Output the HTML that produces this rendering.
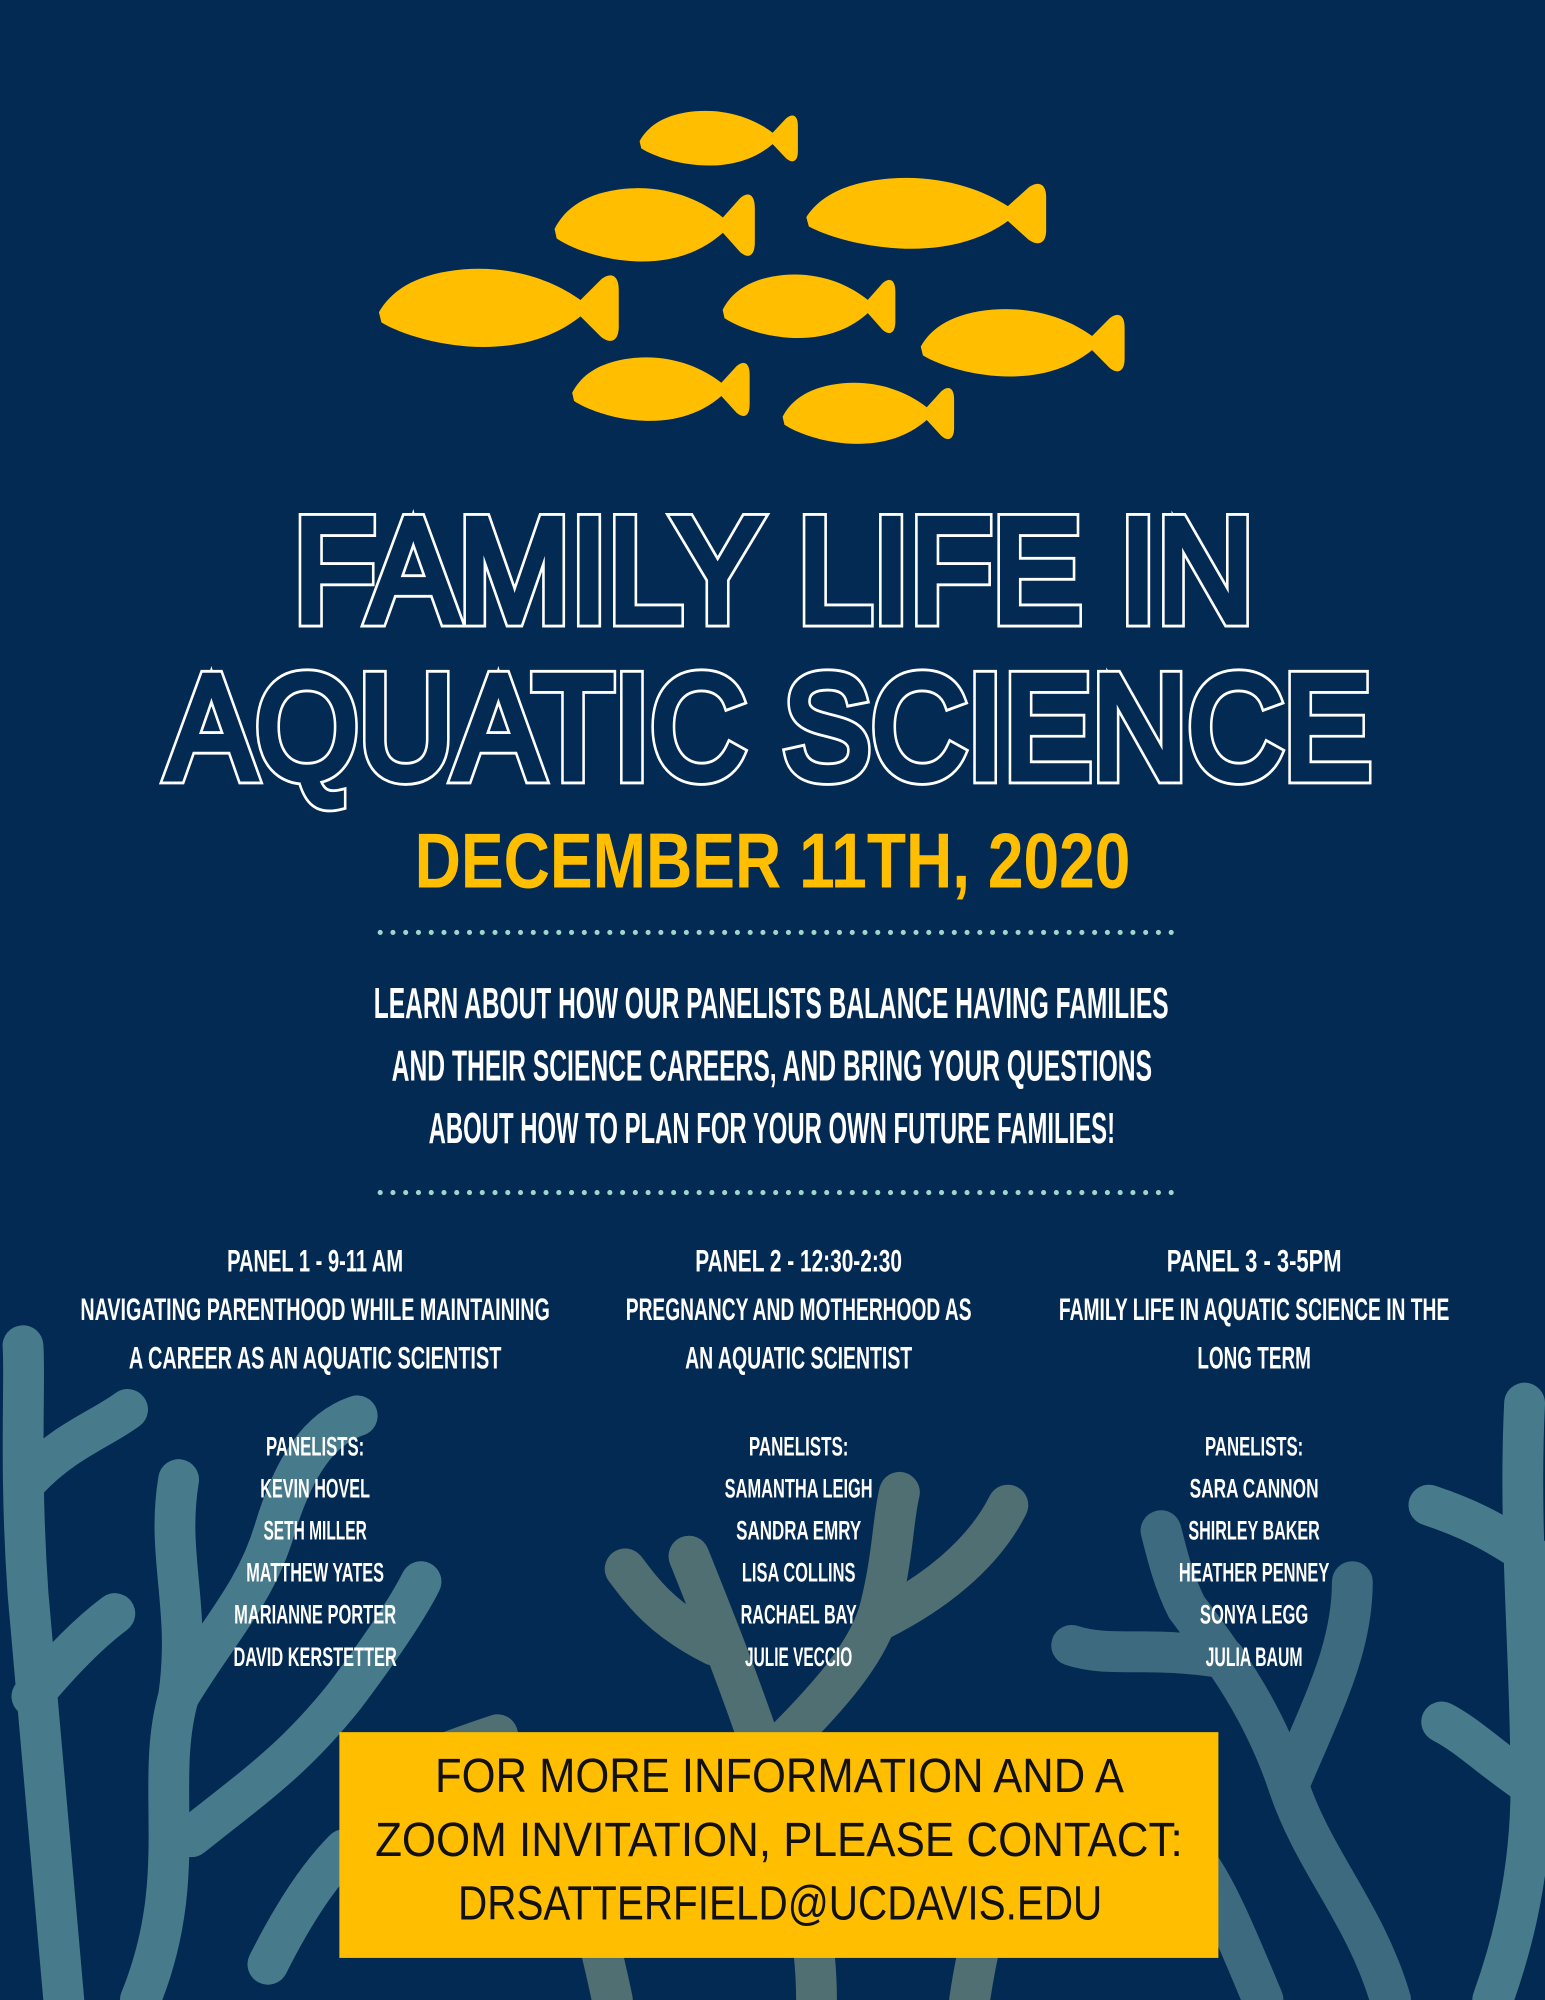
<!DOCTYPE html>
<html><head><meta charset="utf-8"><style>
html,body{margin:0;padding:0;background:#032a52;}
svg{display:block;width:1545px;height:2000px;}
.w{font-family:"Liberation Sans",sans-serif;font-weight:bold;fill:#fff;text-anchor:middle;}
</style></head><body>
<svg viewBox="0 0 1211 1568" preserveAspectRatio="none" xmlns="http://www.w3.org/2000/svg">
<rect width="1211" height="1568" fill="#032a52"/>
<defs>
<path id="f" d="M1,23 C6,12 16,4 34,2 C54,0 70,8 80,17 L88,7 C92,3 95,5 95,12 L95,30 C95,37 92,39 88,35 L80,25 C72,33 60,40 42,40 C26,40 10,34 2,28 Z"/>
</defs>
<g fill="none" stroke-linecap="round" stroke-linejoin="round">
<g stroke="#477b8c" stroke-width="32">
<path d="M50,1568 C40,1450 30,1350 22,1250 C15,1150 20,1080 18,1055"/>
<path d="M22,1160 C50,1130 80,1120 100,1105"/>
<path d="M25,1330 C50,1300 70,1280 90,1265"/>
<path d="M110,1568 C150,1470 120,1400 140,1330 C150,1260 130,1220 140,1160"/>
<path d="M140,1330 C170,1280 200,1250 215,1200 C230,1150 250,1120 280,1110"/>
<path d="M150,1440 C200,1400 230,1380 270,1330 C300,1290 320,1260 330,1240"/>
<path d="M210,1540 C230,1500 250,1470 270,1450"/>
<path d="M1195,1100 C1190,1200 1200,1300 1200,1400 C1200,1480 1180,1540 1170,1568"/>
<path d="M1200,1220 C1170,1200 1150,1190 1120,1180"/>
<path d="M1200,1400 C1170,1380 1150,1360 1130,1350"/>
</g>
<g stroke="#3e6a80" stroke-width="32">
<path d="M1090,1568 C1070,1500 1030,1460 1010,1400 C990,1340 960,1300 930,1260 C920,1240 915,1220 910,1200"/>
<path d="M1010,1400 C1040,1330 1060,1290 1060,1240"/>
<path d="M960,1300 C900,1290 870,1300 840,1290"/>
<path d="M990,1568 C970,1520 950,1470 930,1450 C900,1420 880,1420 860,1400"/>
</g>
<g stroke="#4f6f72" stroke-width="32">
<path d="M640,1568 C640,1500 620,1440 600,1380 C580,1320 560,1270 540,1220"/>
<path d="M600,1380 C640,1340 680,1300 690,1260 C700,1220 700,1190 705,1170"/>
<path d="M690,1270 C730,1250 770,1220 790,1180"/>
<path d="M560,1290 C520,1270 505,1250 490,1230"/>
<path d="M760,1568 C770,1500 790,1440 820,1400"/>
<path d="M480,1568 C470,1520 460,1480 440,1450"/>
<path d="M300,1400 C330,1380 360,1370 390,1360"/>
</g>
</g>
<g fill="#ffbf00">
<use href="#f" transform="translate(500,85) scale(1.32,1.12)"/>
<use href="#f" transform="translate(433,145) scale(1.67,1.5)"/>
<use href="#f" transform="translate(630,137) scale(2.0,1.45)"/>
<use href="#f" transform="translate(295,208) scale(2.0,1.6)"/>
<use href="#f" transform="translate(565,213) scale(1.44,1.3)"/>
<use href="#f" transform="translate(720,240) scale(1.7,1.38)"/>
<use href="#f" transform="translate(447,278) scale(1.48,1.3)"/>
<use href="#f" transform="translate(612,298) scale(1.43,1.25)"/>
</g>
<g font-family="Liberation Sans, sans-serif" font-size="116" text-anchor="start">
<text x="230" y="487" textLength="753" lengthAdjust="spacingAndGlyphs" fill="#fff" stroke="#fff" stroke-width="10">FAMILY LIFE IN</text>
<text x="230" y="487" textLength="753" lengthAdjust="spacingAndGlyphs" fill="#032a52" stroke="#032a52" stroke-width="5.5">FAMILY LIFE IN</text>
<text x="131" y="610" textLength="944" lengthAdjust="spacingAndGlyphs" fill="#fff" stroke="#fff" stroke-width="10">AQUATIC SCIENCE</text>
<text x="131" y="610" textLength="944" lengthAdjust="spacingAndGlyphs" fill="#032a52" stroke="#032a52" stroke-width="5.5">AQUATIC SCIENCE</text>
</g>
<text x="325" y="696" font-family="Liberation Sans, sans-serif" font-weight="bold" font-size="61" fill="#ffbf00" textLength="561" lengthAdjust="spacingAndGlyphs">DECEMBER 11TH, 2020</text>
<line x1="298" y1="731" x2="920" y2="731" stroke="#9fd6cc" stroke-width="4" stroke-linecap="round" stroke-dasharray="0 10"/>
<line x1="298" y1="935" x2="920" y2="935" stroke="#9fd6cc" stroke-width="4" stroke-linecap="round" stroke-dasharray="0 10"/>
<g class="w" font-size="34">
<text x="604.5" y="798" textLength="623" lengthAdjust="spacingAndGlyphs">LEARN ABOUT HOW OUR PANELISTS BALANCE HAVING FAMILIES</text>
<text x="605" y="847" textLength="596" lengthAdjust="spacingAndGlyphs">AND THEIR SCIENCE CAREERS, AND BRING YOUR QUESTIONS</text>
<text x="605" y="896" textLength="538" lengthAdjust="spacingAndGlyphs">ABOUT HOW TO PLAN FOR YOUR OWN FUTURE FAMILIES!</text>
</g>
<g class="w" font-size="25">
<text x="247" y="997" textLength="138" lengthAdjust="spacingAndGlyphs">PANEL 1 - 9-11 AM</text>
<text x="247" y="1035" textLength="368" lengthAdjust="spacingAndGlyphs">NAVIGATING PARENTHOOD WHILE MAINTAINING</text>
<text x="247" y="1073" textLength="292" lengthAdjust="spacingAndGlyphs">A CAREER AS AN AQUATIC SCIENTIST</text>
<text x="626" y="997" textLength="162" lengthAdjust="spacingAndGlyphs">PANEL 2 - 12:30-2:30</text>
<text x="626" y="1035" textLength="271" lengthAdjust="spacingAndGlyphs">PREGNANCY AND MOTHERHOOD AS</text>
<text x="626" y="1073" textLength="178" lengthAdjust="spacingAndGlyphs">AN AQUATIC SCIENTIST</text>
<text x="983" y="997" textLength="137" lengthAdjust="spacingAndGlyphs">PANEL 3 -  3-5PM</text>
<text x="983" y="1035" textLength="306" lengthAdjust="spacingAndGlyphs">FAMILY LIFE IN AQUATIC SCIENCE IN THE</text>
<text x="983" y="1073" textLength="89" lengthAdjust="spacingAndGlyphs">LONG TERM</text>
</g>
<g class="w" font-size="21">
<text x="247" y="1141" textLength="77" lengthAdjust="spacingAndGlyphs">PANELISTS:</text>
<text x="247" y="1174" textLength="86" lengthAdjust="spacingAndGlyphs">KEVIN HOVEL</text>
<text x="247" y="1207" textLength="81" lengthAdjust="spacingAndGlyphs">SETH MILLER</text>
<text x="247" y="1240" textLength="108" lengthAdjust="spacingAndGlyphs">MATTHEW YATES</text>
<text x="247" y="1273" textLength="127" lengthAdjust="spacingAndGlyphs">MARIANNE PORTER</text>
<text x="247" y="1306" textLength="128" lengthAdjust="spacingAndGlyphs">DAVID KERSTETTER</text>
<text x="626" y="1141" textLength="78" lengthAdjust="spacingAndGlyphs">PANELISTS:</text>
<text x="626" y="1174" textLength="116" lengthAdjust="spacingAndGlyphs">SAMANTHA LEIGH</text>
<text x="626" y="1207" textLength="98" lengthAdjust="spacingAndGlyphs">SANDRA EMRY</text>
<text x="626" y="1240" textLength="89" lengthAdjust="spacingAndGlyphs">LISA COLLINS</text>
<text x="626" y="1273" textLength="91" lengthAdjust="spacingAndGlyphs">RACHAEL BAY</text>
<text x="626" y="1306" textLength="84" lengthAdjust="spacingAndGlyphs">JULIE VECCIO</text>
<text x="983" y="1141" textLength="77" lengthAdjust="spacingAndGlyphs">PANELISTS:</text>
<text x="983" y="1174" textLength="101" lengthAdjust="spacingAndGlyphs">SARA CANNON</text>
<text x="983" y="1207" textLength="103" lengthAdjust="spacingAndGlyphs">SHIRLEY BAKER</text>
<text x="983" y="1240" textLength="118" lengthAdjust="spacingAndGlyphs">HEATHER PENNEY</text>
<text x="983" y="1273" textLength="85" lengthAdjust="spacingAndGlyphs">SONYA LEGG</text>
<text x="983" y="1306" textLength="76" lengthAdjust="spacingAndGlyphs">JULIA BAUM</text>
</g>
<rect x="266" y="1358" width="689" height="177" fill="#ffbf00"/>
<g font-family="Liberation Sans, sans-serif" font-size="38" fill="#111" text-anchor="middle">
<text x="611" y="1405" textLength="540" lengthAdjust="spacingAndGlyphs">FOR MORE INFORMATION AND A</text>
<text x="610.5" y="1455" textLength="633" lengthAdjust="spacingAndGlyphs">ZOOM INVITATION, PLEASE CONTACT:</text>
<text x="611.5" y="1505" textLength="505" lengthAdjust="spacingAndGlyphs">DRSATTERFIELD@UCDAVIS.EDU</text>
</g>
</svg>
</body></html>
